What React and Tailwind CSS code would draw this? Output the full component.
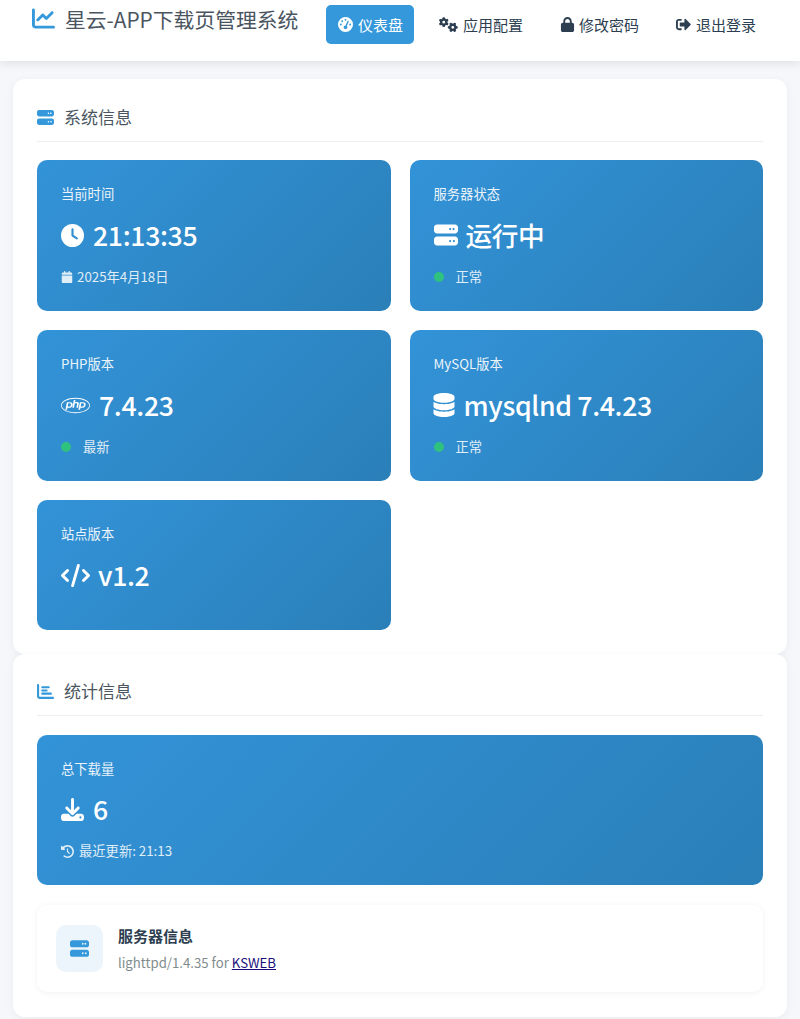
import React from "react";
import { FaSignOutAlt } from "react-icons/fa";
import { FaChartLine, FaGaugeHigh, FaGears, FaLock, FaServer, FaClock, FaCalendar, FaPhp, FaDatabase, FaCode, FaChartBar, FaDownload, FaClockRotateLeft } from "react-icons/fa6";

function NavItem({ icon, label, active, className }) {
  return (
    <a className={`flex items-center h-[39px] rounded-[5px] text-[15px] ${active ? "bg-[#3498db] text-white" : "text-[#2c3e50]"} ${className}`}>
      {icon}
      <span className="pt-[2px]">{label}</span>
    </a>
  );
}

function Dot() {
  return <span className="w-[10px] h-[10px] rounded-full bg-[#2ecc71] mr-[12px]" />;
}

function StatCard({ label, icon, value, foot, heightClass = "h-[151px]", gapClass }) {
  return (
    <div className={`rounded-[10px] bg-[linear-gradient(135deg,#3393d8,#2a7fb8)] p-[24px] text-white ${heightClass}`}>
      <div className="text-[13.3px] leading-[20px] opacity-90">{label}</div>
      <div className={`flex items-center h-[40px] mt-[11px] text-[26.67px] font-medium tracking-[-0.35px] leading-[40px] ${gapClass}`}>
        {icon}
        <span>{value}</span>
      </div>
      {foot && <div className="flex items-center h-[20px] mt-[11.5px] text-[13.3px] leading-[20px] opacity-85">{foot}</div>}
    </div>
  );
}

function SectionTitle({ icon, label }) {
  return (
    <div className="flex items-center h-[38px] border-b border-[#eeeeee] text-[17px] text-[#4a5560] pb-[11px]">
      <span className="w-[27px] text-[#3498db] flex items-center">{icon}</span>
      {label}
    </div>
  );
}

export default function App() {
  return (
    <div className="w-[800px] h-[1019px] overflow-hidden bg-[#f5f7fa] font-['Noto_Sans_CJK_SC','Noto_Sans',sans-serif]">
      <header className="h-[61px] bg-white shadow-[0_2px_10px_rgba(0,0,0,0.1)] flex pl-[32px] pt-[5px]">
        <div className="flex items-center h-[30px] w-[294px] text-[20.8px] text-[#4a5560]">
          <FaChartLine className="text-[#3498db] text-[23px] mr-[10px] shrink-0 -translate-y-[2px]" />
          <span className="whitespace-nowrap">星云-APP下载页管理系统</span>
        </div>
        <nav className="flex">
          <NavItem active className="w-[88px] pl-[12px] gap-[5px]" icon={<FaGaugeHigh className="text-[15px]" />} label="仪表盘" />
          <NavItem className="w-[121px] pl-[25px] gap-[5px]" icon={<FaGears className="text-[19px]" />} label="应用配置" />
          <NavItem className="w-[116px] pl-[25px] gap-[4px]" icon={<FaLock className="text-[15px]" />} label="修改密码" />
          <NavItem className="w-[110px] pl-[25px] gap-[5px]" icon={<FaSignOutAlt className="text-[15px]" />} label="退出登录" />
        </nav>
      </header>

      <main className="px-[13px] pt-[18px]">
        <section className="h-[575px] rounded-[12px] bg-white shadow-[0_2px_10px_rgba(0,0,0,0.05)] px-[24px] pt-[25px]">
          <SectionTitle icon={<FaServer className="text-[17px]" />} label="系统信息" />
          <div className="grid grid-cols-2 gap-x-[19px] gap-y-[19px] mt-[18px]">
            <StatCard label="当前时间" icon={<FaClock className="text-[23px]" />} gapClass="gap-[9px]" value="21:13:35"
              foot={<><FaCalendar className="text-[12px] mr-[4px]" />2025年4月18日</>} />
            <StatCard label="服务器状态" icon={<FaServer className="text-[24px]" />} gapClass="gap-[8px]" value="运行中"
              foot={<><Dot />正常</>} />
            <StatCard label="PHP版本" icon={<FaPhp className="text-[29px]" />} gapClass="gap-[9px]" value="7.4.23"
              foot={<><Dot />最新</>} />
            <StatCard label="MySQL版本" icon={<FaDatabase className="text-[24px] -ml-[1.5px]" />} gapClass="gap-[7.5px]" value="mysqlnd 7.4.23"
              foot={<><Dot />正常</>} />
            <StatCard heightClass="h-[130px]" label="站点版本" icon={<FaCode className="text-[29px]" />} gapClass="gap-[8px]" value="v1.2" />
          </div>
        </section>

        <section className="h-[363px] rounded-[12px] bg-white shadow-[0_2px_10px_rgba(0,0,0,0.05)] px-[24px] pt-[24px]">
          <SectionTitle icon={<FaChartBar className="text-[17px]" />} label="统计信息" />
          <div className="mt-[19px]">
            <StatCard heightClass="h-[150px]" label="总下载量" icon={<FaDownload className="text-[23px]" />} gapClass="gap-[9px] -translate-y-[1px]" value="6"
              foot={<><FaClockRotateLeft className="text-[13px] mr-[5px]" /><span className="-translate-y-[1px]">最近更新: 21:13</span></>} />
          </div>
          <div className="mt-[20px] h-[87px] rounded-[10px] bg-white shadow-[0_1px_6px_rgba(0,0,0,0.06)] flex items-center pl-[19px]">
            <div className="w-[47px] h-[47px] rounded-[10px] bg-[#ebf5fb] flex items-center justify-center text-[#3498db]">
              <FaServer className="text-[19px]" />
            </div>
            <div className="ml-[15px] translate-y-[1px]">
              <div className="text-[15px] font-bold leading-[24px] text-[#2c3e50]">服务器信息</div>
              <div className="text-[13.2px] leading-[24px] mt-[3px] text-[#7f8c8d]">
                lighttpd/1.4.35 for <a className="text-[#1a0d7b] underline">KSWEB</a>
              </div>
            </div>
          </div>
        </section>
      </main>
    </div>
  );
}
